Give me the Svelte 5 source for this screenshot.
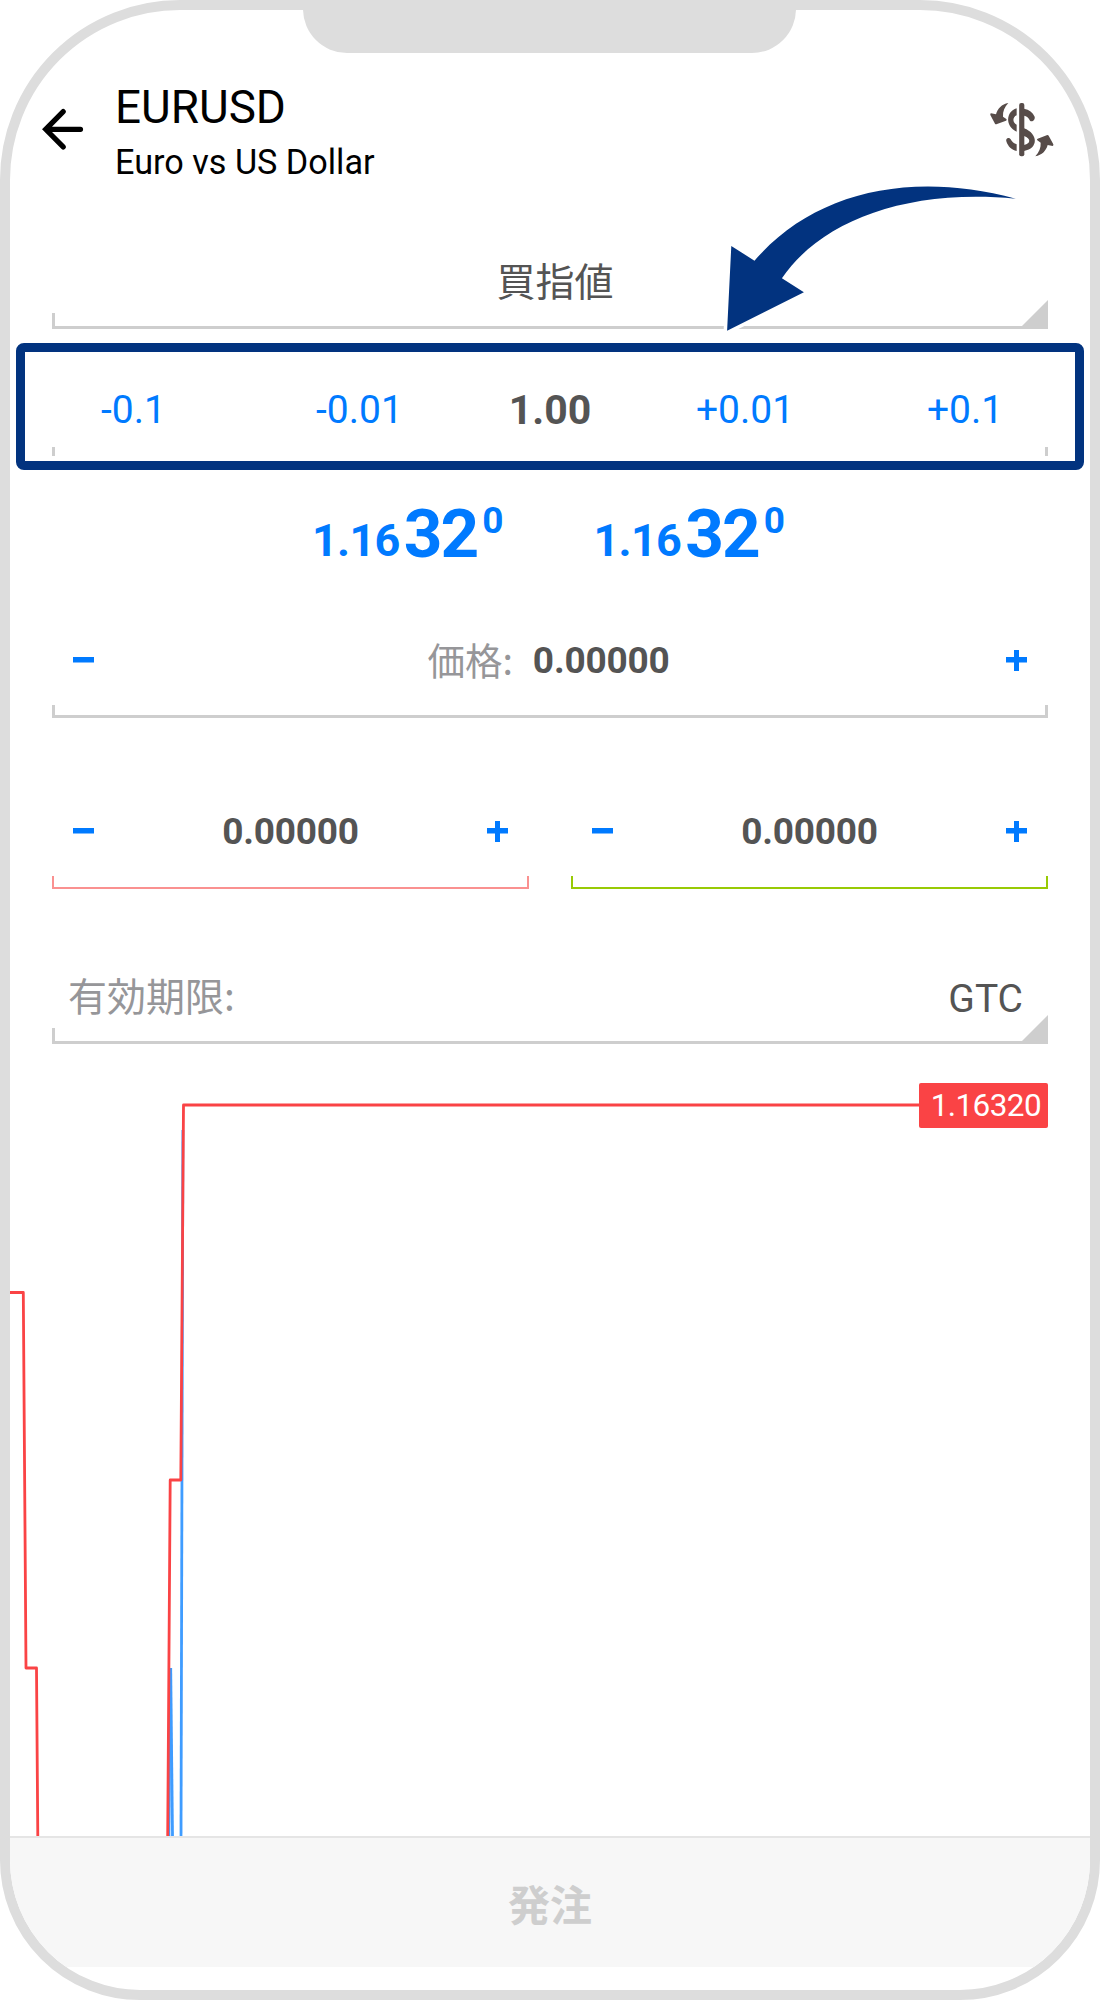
<script>
  let symbol = 'EURUSD';
  let description = 'Euro vs US Dollar';
  let orderType = '買指値';
  let volume = 1;
  let price = 0;
  let stopLoss = 0;
  let takeProfit = 0;
  let expiration = 'GTC';

  const quotes = [
    { id: 'bid', base: '1.16', big: '32', pip: '0' },
    { id: 'ask', base: '1.16', big: '32', pip: '0' }
  ];

  function changeVolume(step) {
    volume = Math.max(0.01, volume + step);
  }

  function step(value, delta) {
    return Math.max(0, value + delta);
  }
</script>

<div class="phone">
  <div class="notch"></div>

  <header class="header">
    <button class="icon-button" aria-label="Back">
      <svg width="44" height="42" viewBox="0 0 44 42" fill="none" stroke="#000" stroke-width="5.2" stroke-linecap="round" stroke-linejoin="miter">
        <path d="M22.2 3.6 4.7 21.3l17.5 17.6M5 21.3h34.5" />
      </svg>
    </button>
    <div class="titles">
      <div class="symbol">{symbol}</div>
      <div class="description">{description}</div>
    </div>
    <button class="icon-button trade" aria-label="Trade">
      <svg width="64" height="56" viewBox="59 65 192 168" fill="#574c49">
        <rect x="146.500" y="68" width="15.500" height="160" rx="6" />
        <path d="M139 84C106 94 104 138 139 154V133C126 127 126 110 139 105Z" />
        <path d="M161 85C177 88 187 96 193 109C195 118 186 126 179 121C175 112 169 107 161 106Z" />
        <path fill-rule="evenodd" d="M161 144C204 160 205 205 161 212ZM161 167V194C182 190 182 174 161 167Z" />
        <path d="M108 183C105 173 116 169 121 177C125 185 131 190 139 192V212C124 209 113 199 108 183Z" />
        <path id="swap" d="M114 68C94 72 82 84 77 102L62 99Q59 100 60 104L74 130Q76 133 80 131L107 121Q111 119 108 116L98 109C97 93 103 80 114 68Z" />
        <use href="#swap" transform="rotate(180 154.500 148)" />
      </svg>
    </button>
  </header>

  <div class="select type">
    <span class="select-value">{orderType}</span>
    <div class="bracket open">
      <svg class="corner" width="29" height="29" viewBox="0 0 29 29"><path d="M29 0v29H0z" /></svg>
    </div>
  </div>

  <div class="volume">
    <div class="volume-row">
      <button class="step" on:click={() => changeVolume(-0.1)}>-0.1</button>
      <button class="step" on:click={() => changeVolume(-0.01)}>-0.01</button>
      <span class="volume-value">{volume.toFixed(2)}</span>
      <button class="step" on:click={() => changeVolume(0.01)}>+0.01</button>
      <button class="step" on:click={() => changeVolume(0.1)}>+0.1</button>
    </div>
    <div class="ticks"></div>
  </div>

  <div class="quotes">
    {#each quotes as quote (quote.id)}
      <div class="quote">
        <span class="base">{quote.base}</span><span class="big">{quote.big}</span><span class="pip">{quote.pip}</span>
      </div>
    {/each}
  </div>

  <div class="field price">
    <div class="field-row">
      <button class="sign minus" aria-label="Decrease price" on:click={() => (price = step(price, -0.00001))}></button>
      <span class="price-value"><span class="label">価格:</span><span class="number">{price.toFixed(5)}</span></span>
      <button class="sign plus" aria-label="Increase price" on:click={() => (price = step(price, 0.00001))}></button>
    </div>
    <div class="bracket"></div>
  </div>

  <div class="stops">
    <div class="field loss">
      <div class="field-row">
        <button class="sign minus" aria-label="Decrease stop loss" on:click={() => (stopLoss = step(stopLoss, -0.00001))}></button>
        <span class="number">{stopLoss.toFixed(5)}</span>
        <button class="sign plus" aria-label="Increase stop loss" on:click={() => (stopLoss = step(stopLoss, 0.00001))}></button>
      </div>
      <div class="bracket"></div>
    </div>
    <div class="field profit">
      <div class="field-row">
        <button class="sign minus" aria-label="Decrease take profit" on:click={() => (takeProfit = step(takeProfit, -0.00001))}></button>
        <span class="number">{takeProfit.toFixed(5)}</span>
        <button class="sign plus" aria-label="Increase take profit" on:click={() => (takeProfit = step(takeProfit, 0.00001))}></button>
      </div>
      <div class="bracket"></div>
    </div>
  </div>

  <div class="select expiry">
    <div class="expiry-row">
      <span class="expiry-label">有効期限:</span>
      <span class="expiry-value">{expiration}</span>
    </div>
    <div class="bracket open">
      <svg class="corner" width="29" height="29" viewBox="0 0 29 29"><path d="M29 0v29H0z" /></svg>
    </div>
  </div>

  <div class="chart">
    <svg width="1080" height="792" viewBox="10 1044 1080 792" fill="none" stroke-width="2.800">
      <g stroke="#3f9cff">
        <path d="M182.900 1130 181 1836" />
        <path d="M170.700 1668 172.500 1836" />
        <path d="M170.300 1668 168.900 1836" />
      </g>
      <g stroke="#fa4345" stroke-linejoin="round">
        <path d="M10 1292.500H23.300L26 1668H36.500L37.800 1836" />
        <path d="M167.700 1836 170.200 1480H180.800L183.500 1105H920" />
      </g>
    </svg>
    <span class="tag">1.16320</span>
  </div>

  <button class="submit">発注</button>

  <svg class="pointer" width="310" height="160" viewBox="715 180 310 160">
    <path d="M1015.800 198.700C908 170 813 193 754.500 260.700L731.300 246 727.100 330.700 803.900 292.300 781.900 278.300C820 222 905 188 1015.800 198.700Z" />
  </svg>
</div>

<style>
  :global(body) {
    margin: 0;
    background: #fff;
  }

  .phone {
    position: relative;
    box-sizing: border-box;
    width: 1100px;
    height: 2000px;
    display: flex;
    flex-direction: column;
    overflow: hidden;
    border: 10px solid #ddd;
    border-radius: 180px 180px 140px 140px;
    background: #fff;
    color: #545454;
    font-family: Roboto, "Noto Sans CJK JP", sans-serif;
  }

  button {
    padding: 0;
    border: none;
    background: none;
    font: inherit;
    color: inherit;
    cursor: pointer;
  }

  svg {
    display: block;
  }

  .notch {
    position: absolute;
    top: -1px;
    left: 293px;
    width: 493px;
    height: 44px;
    border-radius: 0 0 46px 46px;
    background: #ddd;
  }

  .header {
    display: flex;
    height: 190px;
    color: #000;
  }

  .icon-button {
    align-self: flex-start;
    margin: 98px 0 0 31px;
  }

  .titles {
    flex: 1;
    padding: 68px 0 0 30px;
  }

  .symbol {
    height: 60px;
    font-size: 45.8px;
    line-height: 60px;
  }

  .description {
    height: 48px;
    font-size: 34.2px;
    line-height: 48px;
  }

  .trade {
    margin: 92px 36px 0 0;
  }

  .select {
    display: flex;
    flex-direction: column;
    justify-content: flex-end;
    margin: 0 42px;
  }

  .type {
    height: 129px;
  }

  .select-value {
    padding-left: 10px;
    text-align: center;
    font-size: 39px;
    line-height: 60px;
  }

  .bracket {
    box-sizing: border-box;
    height: 13px;
    border: 3px solid #cecece;
    border-top: none;
  }

  .bracket.open {
    position: relative;
    height: 16px;
    border-right: none;
  }

  .corner {
    position: absolute;
    right: 0;
    bottom: -3px;
    fill: #cecece;
  }

  .volume {
    box-sizing: border-box;
    height: 127px;
    margin: 14px 6px 1px;
    padding: 0 27px;
    border: 9px solid #02337f;
    border-radius: 8px;
    display: flex;
    flex-direction: column;
  }

  .volume-row {
    box-sizing: border-box;
    display: grid;
    grid-template-columns: 161px 291px 90px 300px 140px;
    align-items: center;
    height: 95px;
    padding: 20px 0 0 1px;
    text-align: center;
  }

  .step {
    color: #007aff;
    font-size: 39px;
    line-height: 60px;
  }

  .volume-value {
    font-size: 41px;
    font-weight: 700;
    line-height: 60px;
  }

  .ticks {
    height: 9px;
    border: solid #cecece;
    border-width: 0 3px;
  }

  .quotes {
    display: flex;
    height: 119px;
    padding-left: 302px;
  }

  .quote {
    display: flex;
    align-items: flex-start;
    width: 281.5px;
    color: #007aff;
    font-weight: 700;
  }

  .base {
    margin-top: 40px;
    font-size: 45px;
    letter-spacing: -0.7px;
    line-height: 60px;
  }

  .big {
    margin: 23px 0 0 4px;
    font-size: 67.5px;
    letter-spacing: -2px;
    line-height: 80px;
  }

  .pip {
    margin: 20px 0 0 5px;
    font-size: 37px;
    line-height: 60px;
  }

  .field {
    display: flex;
    flex-direction: column;
    justify-content: flex-end;
  }

  .price {
    height: 128px;
    margin: 0 42px;
  }

  .field-row {
    display: flex;
    align-items: center;
    justify-content: space-between;
    height: 60px;
    margin: 0 21px 15px;
  }

  .number {
    padding-top: 2px;
    font-size: 37px;
    font-weight: 700;
    letter-spacing: -0.2px;
    line-height: 60px;
  }

  .price-value {
    display: flex;
    align-items: center;
    margin-right: 3px;
  }

  .label {
    margin: -2px 20px 0 0;
    color: #969699;
    font-family: "Noto Sans CJK JP", sans-serif;
    font-size: 37.5px;
    line-height: 60px;
  }

  .sign {
    width: 21px;
    height: 21px;
    background: linear-gradient(#007aff, #007aff) center / 21px 5.5px no-repeat;
  }

  .plus {
    background:
      linear-gradient(#007aff, #007aff) center / 21px 5.5px no-repeat,
      linear-gradient(#007aff, #007aff) center / 5px 21px no-repeat;
  }

  .stops {
    display: grid;
    grid-template-columns: 1fr 1fr;
    gap: 42px;
    height: 171px;
    margin: 0 42px;
  }

  .stops .bracket {
    border-width: 0 2px 2px;
  }

  .loss .bracket {
    border-color: #fa9190;
  }

  .profit .bracket {
    border-color: #98ca05;
  }

  .expiry {
    height: 155px;
  }

  .expiry-row {
    display: flex;
    justify-content: space-between;
    height: 64px;
    padding: 0 25px 0 16px;
    font-size: 39px;
    line-height: 60px;
  }

  .expiry-label {
    color: #969699;
    font-family: "Noto Sans CJK JP", sans-serif;
  }

  .expiry-value {
    padding-top: 5px;
  }

  .chart {
    position: relative;
    height: 792px;
  }

  .tag {
    position: absolute;
    top: 39px;
    right: 42px;
    box-sizing: border-box;
    width: 129px;
    height: 45px;
    padding-right: 7px;
    border-radius: 2px;
    background: #fa4345;
    color: #fff;
    font-size: 31.5px;
    letter-spacing: -0.6px;
    line-height: 46px;
    text-align: right;
  }

  .submit {
    box-sizing: border-box;
    height: 131px;
    border-top: 2px solid #e5e5e5;
    background: #f7f7f7;
    color: #cecece;
    font-size: 42px;
    font-weight: 700;
  }

  .pointer {
    position: absolute;
    top: 170px;
    left: 705px;
    fill: #02337f;
    stroke: #fff;
    stroke-width: 7px;
    paint-order: stroke;
  }
</style>
